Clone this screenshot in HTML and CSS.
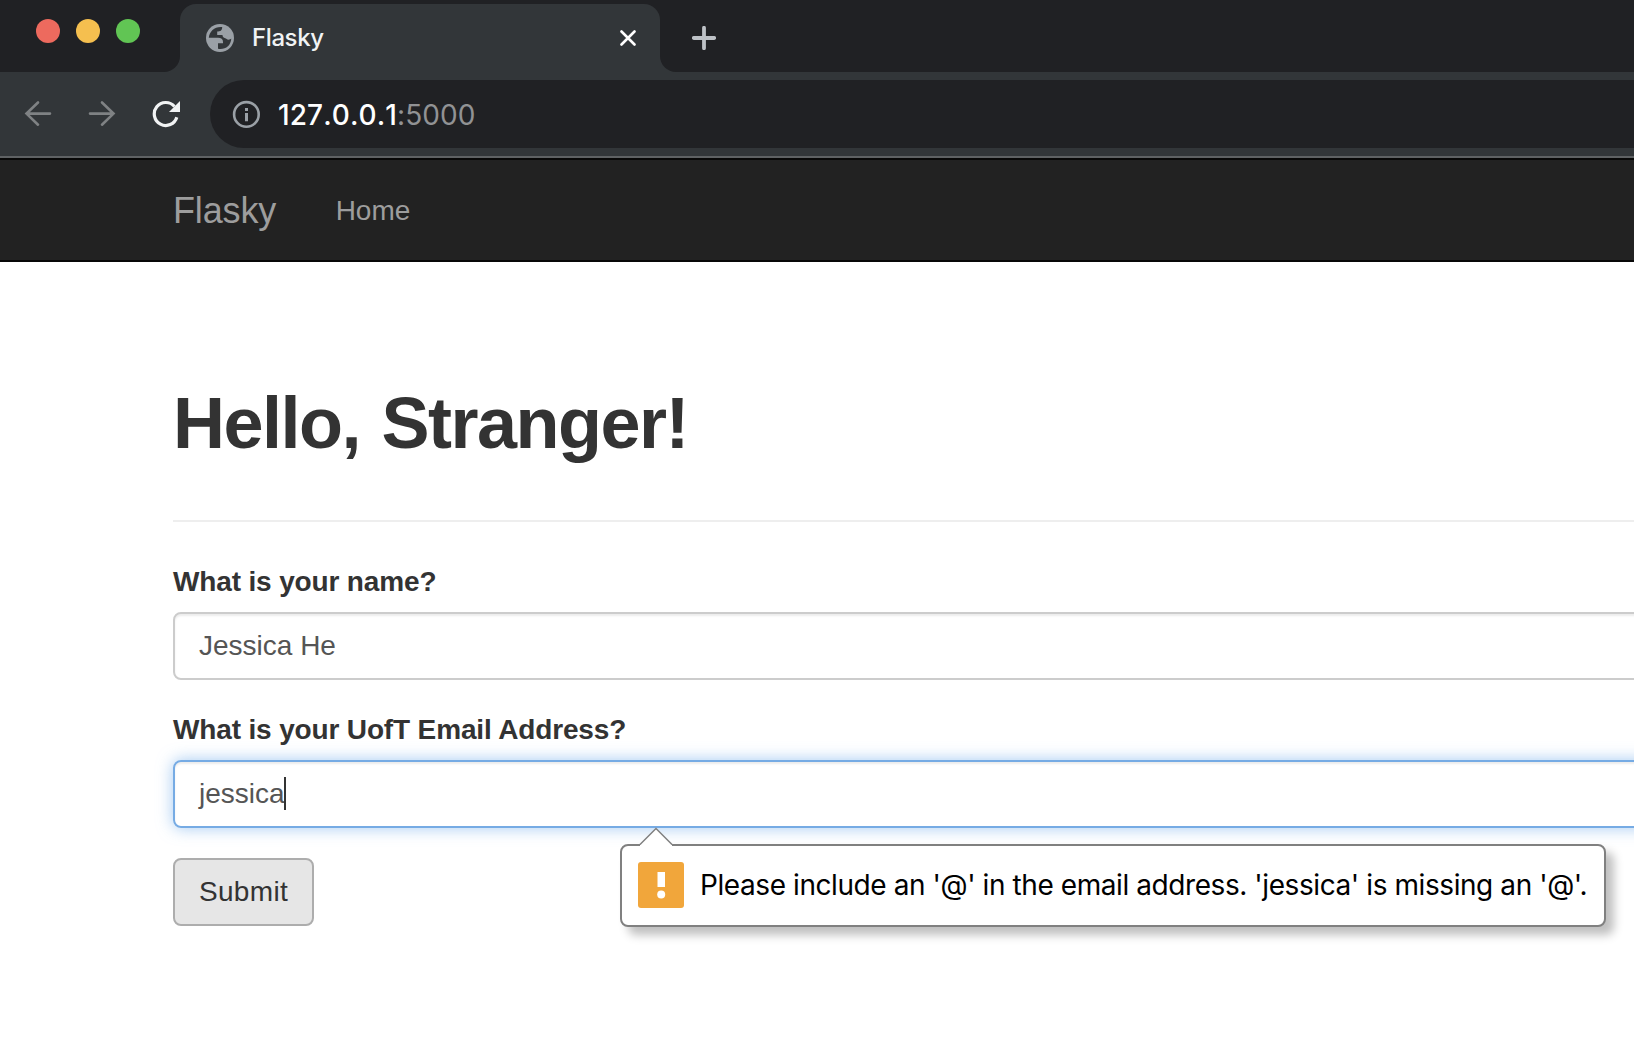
FILE: index.html
```html
<!DOCTYPE html>
<html lang="en">
<head>
<meta charset="utf-8">
<title>Flasky</title>
<link rel="stylesheet" href="styles.css">
</head>
<body>
<header class="browser">
  <div class="tabstrip">
    <div class="window-controls"><i class="dot red"></i><i class="dot yellow"></i><i class="dot green"></i></div>
    <div class="tab-slot">
      <div class="tab">
        <svg class="globe" width="28" height="28" viewBox="0 0 28 28"><circle cx="14" cy="14" r="14" fill="#9aa0a6"/><path d="M16.200 3C9 2.200 3.500 7 2.800 13.800H12c3 0 5 1.400 5 4.200v1.200h-5v5.600c7 1.300 13-3 13.300-10.300-1.200 1.300-3.500 1.700-5 .2-1-.9-3.800-.7-3.800-3.700h-5.300V7.500c3 0 5-.8 5-4.500Z" fill="#323639"/></svg>
        <span class="tab-title">Flasky</span>
        <svg class="close" width="16" height="16" viewBox="0 0 16 16"><path d="M1.500 1.500 14.500 14.500M14.500 1.500 1.500 14.500" stroke="#fff" stroke-width="2.600" stroke-linecap="round"/></svg>
      </div>
    </div>
    <div class="strip-rest">
      <svg width="24" height="24" viewBox="0 0 24 24"><path d="M12 1.800V22.200M1.800 12H22.200" stroke="#bdc1c6" stroke-width="3.800" stroke-linecap="round"/></svg>
    </div>
  </div>
  <div class="toolbar">
    <svg class="back" width="28" height="28" viewBox="0 0 28 28" fill="none" stroke="#7f8284" stroke-width="2.600" stroke-linecap="round"><path d="M26 13.600H2.500M14 2.500 2.500 13.600 14 24.700"/></svg>
    <svg class="forward" width="28" height="28" viewBox="0 0 28 28" fill="none" stroke="#7f8284" stroke-width="2.600" stroke-linecap="round"><path d="M2 13.600H25.500M14 2.500 25.500 13.600 14 24.700"/></svg>
    <svg class="reload" width="28" height="28" viewBox="0 0 28 28"><path d="M22.500 6.500A11.500 11.500 0 1 0 24.800 17.300" fill="none" stroke="#f1f3f4" stroke-width="3.200"/><path d="M28 1V12H17Z" fill="#f1f3f4"/></svg>
    <div class="omnibox">
      <svg width="28" height="28" viewBox="0 0 28 28"><circle cx="14.400" cy="14.400" r="12.300" fill="none" stroke="#9aa0a6" stroke-width="2.600"/><path d="M13 8h3v3h-3zM13 13h3v8.300h-3z" fill="#9aa0a6"/></svg>
      <span class="url">127.0.0.1<span class="port">:5000</span></span>
    </div>
  </div>
</header>
<nav class="navbar"><a class="brand">Flasky</a><a class="nav-link">Home</a></nav>
<main class="container">
  <h1>Hello, Stranger!</h1>
  <form>
    <label class="label-name">What is your name?</label>
    <div class="field"><span>Jessica He</span></div>
    <label class="label-email">What is your UofT Email Address?</label>
    <div class="field focused"><span>jessica</span><i class="caret"></i>
      <div class="bubble">
        <svg class="arrow" width="34" height="20" viewBox="0 0 34 20"><path d="M1 20V18L17 1.500 33 18V20Z" fill="#fff"/><path d="M1 17.500 17 1.500 33 17.500" fill="none" stroke="#808080" stroke-width="1.500"/></svg>
        <svg class="warning" width="46" height="46" viewBox="0 0 46 46"><rect width="46" height="46" rx="3" fill="#f1a63b"/><path d="M19.500 10h7.500v15h-7.500z" fill="#fff"/><circle cx="23.200" cy="32.500" r="4" fill="#fff"/></svg>
        <span class="message">Please include an '@' in the email address. 'jessica' is missing an '@'.</span>
      </div>
    </div>
    <button type="button" class="submit">Submit</button>
  </form>
</main>
</body>
</html>
```
FILE: styles.css
```css
* { box-sizing: border-box; }
html, body { margin: 0; height: 100%; overflow: hidden; }
body { background: #fff; color: #333; font: 28px/40px "Liberation Sans", Arial, sans-serif; }
svg { display: block; flex: none; }

.browser { height: 158px; background: #323639; border-bottom: 2px solid #5f6264; font-family: Inter, sans-serif; }
.tabstrip { display: flex; height: 72px; }
.window-controls { display: flex; gap: 16px; width: 180px; padding: 19px 0 0 36px; background: #202124; border-bottom-right-radius: 16px; }
.dot { width: 24px; height: 24px; border-radius: 50%; }
.red { background: #ed6a5e; }
.yellow { background: #f5bf4f; }
.green { background: #61c554; }
.tab-slot { width: 480px; height: 36px; padding-top: 4px; background: #202124; }
.tab { display: flex; align-items: center; height: 68px; padding: 0 24px 0 26px; background: #323639; border-radius: 16px 16px 0 0; }
.tab-title { flex: 1; margin-left: 18px; color: #f1f3f4; font-size: 24px; font-weight: 500; letter-spacing: -.4px; }
.strip-rest { display: flex; align-items: center; flex: 1; padding: 4px 0 0 32px; background: #202124; border-bottom-left-radius: 16px; }

.toolbar { display: flex; align-items: center; height: 84px; padding-left: 24px; }
.forward { margin-left: 36px; }
.reload { margin-left: 36px; }
.omnibox { display: flex; align-items: center; flex: 1; height: 68px; margin-left: 30px; padding-left: 22px; background: #202124; border-radius: 34px 0 0 34px; }
.url { margin-left: 18px; padding-top: 1px; color: #fff; font-size: 28px; font-weight: 500; letter-spacing: .1px; font-kerning: none; font-feature-settings: "calt" 0; }
.port { color: #919294; font-weight: 400; letter-spacing: .1px; }

.navbar { display: flex; align-items: center; height: 104px; padding: 2px 0 0 173px; background: #222; border: solid #080808; border-width: 2px 0; color: #9d9d9d; }
.brand { font-size: 36px; letter-spacing: -.15px; }
.nav-link { margin-left: 59.500px; }

.container { padding: 122px 0 0 173px; }
h1 { margin: 0 0 40px; padding-bottom: 57px; border-bottom: 2px solid #eee; font-size: 72px; line-height: 79px; font-weight: 700; letter-spacing: -1.5px; word-spacing: 3px; }
label { display: block; margin-bottom: 10px; font-weight: 700; letter-spacing: -.15px; }
.field { display: flex; align-items: center; position: relative; height: 68px; margin: 0 -24px 30px 0; padding-left: 24px; border: 2px solid #ccc; border-radius: 8px; color: #555; box-shadow: inset 0 2px 2px rgba(0,0,0,.075); }
.focused { border-color: #76abe4; box-shadow: inset 0 2px 2px rgba(0,0,0,.075), 0 0 16px rgba(102,165,233,.6); }
.caret { width: 2px; height: 33px; margin: -2px 0 0 -1px; background: #333; }
.submit { display: block; width: 141px; height: 68px; padding: 0; border: 2px solid #adadad; border-radius: 8px; background: #e6e6e6; color: #333; font: inherit; letter-spacing: .35px; }

.bubble { position: absolute; left: 445px; top: 82px; display: flex; align-items: flex-start; width: 986px; height: 83px; padding: 16px 0 0 16px; background: #fff; border: 2px solid #808080; border-radius: 8px; box-shadow: 8px 8px 10px rgba(0,0,0,.25); }
.arrow { position: absolute; left: 17px; top: -19px; }
.message { margin-left: 16px; color: #000; font: 28px/46px Inter, sans-serif; letter-spacing: -.42px; white-space: nowrap; }
```
